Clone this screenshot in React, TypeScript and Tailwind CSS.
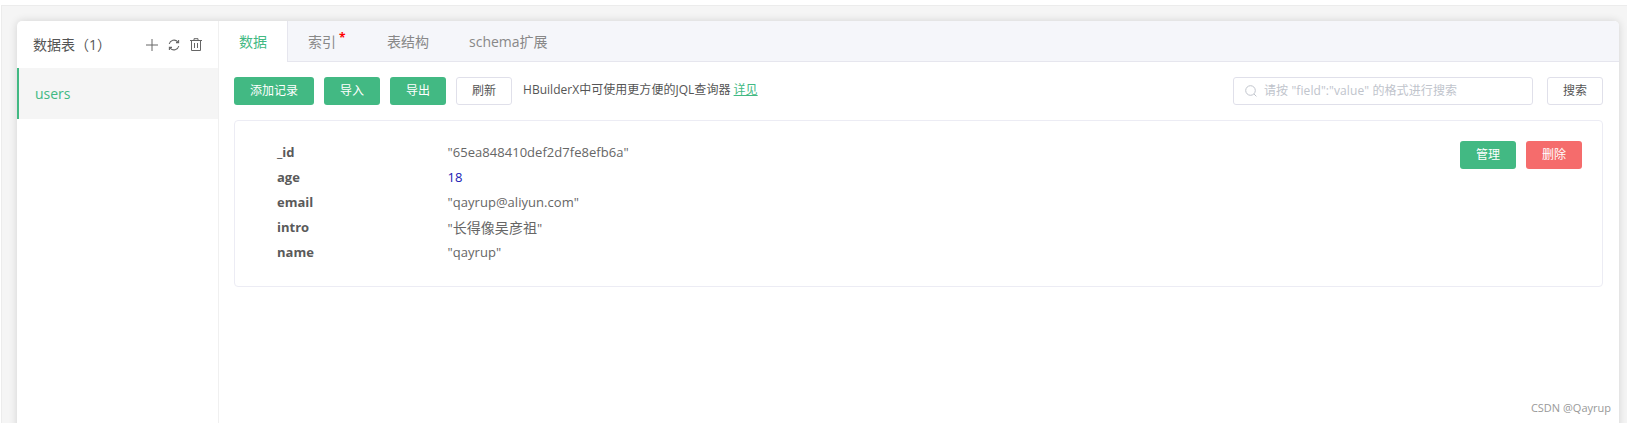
import React from "react";

const font = { fontFamily: '"Open Sans","Noto Sans CJK SC",sans-serif' };

function Btn({ children, w, kind = "green" }: { children: React.ReactNode; w: string; kind?: "green" | "red" | "plain" }) {
  const cls =
    kind === "green"
      ? "bg-[#42b983] text-white"
      : kind === "red"
        ? "bg-[#f56c6c] text-white"
        : "bg-white text-[#555] border border-[#e0e0ea]";
  return <div className={`h-[28px] rounded-[3px] flex items-center justify-center text-[12px] shrink-0 ${w} ${cls}`}>{children}</div>;
}

function Row({ k, v, blue }: { k: string; v: React.ReactNode; blue?: boolean }) {
  return (
    <div className="flex h-[25px] items-center text-[13px]">
      <div className="w-[170.5px] font-bold text-[#5a5a5a] shrink-0">{k}</div>
      <div className={`pt-px tracking-[0.04px] ${blue ? "text-[#1a1ab4]" : "text-[#666]"}`}>{v}</div>
    </div>
  );
}

export default function App() {
  return (
    <div style={font} className="relative h-[423px] w-full overflow-hidden bg-white pt-[5px] pl-px">
      <div className="h-[418px] bg-[#f5f5f5] border-t border-l border-[#ececec] pt-[15px] pl-[15px] pr-[8px]">
        <div className="flex h-[420px] bg-white rounded-t-[5px] shadow-[0_0_8px_rgba(0,0,0,0.14)] overflow-hidden">
          <aside className="w-[202px] shrink-0 border-r border-[#f0f0f0]">
            <div className="h-[47px] flex items-center pl-[16px] pr-[16px] justify-between">
              <span className="text-[14px] text-[#555]">数据表（1）</span>
              <div className="flex items-center gap-[10px] text-[#666]">
                <svg width="12" height="12" viewBox="0 0 12 12" fill="none" stroke="currentColor" strokeWidth="1">
                  <path d="M6 0v12M0 6h12" />
                </svg>
                <svg width="12" height="12" viewBox="0 0 12 12" fill="none" stroke="currentColor" strokeWidth="1.1">
                  <path d="M1.2 5A5 5 0 0 1 9.8 2.8M10.8 7A5 5 0 0 1 2.2 9.2" />
                  <path d="M10.6 1v2.6H8M1.4 11V8.4H4" />
                </svg>
                <svg width="12" height="13" viewBox="0 0 12 13" fill="none" stroke="currentColor" strokeWidth="1">
                  <path d="M0 2.5h12M4 2.5V.7h4v1.8M1.5 2.5v10h9v-10M4.5 5v5M7.5 5v5" />
                </svg>
              </div>
            </div>
            <div className="h-[51px] bg-[#f5f5f5] border-l-2 border-[#42b983] flex items-center pl-[16px] text-[14px] text-[#42b983]">users</div>
          </aside>
          <main className="flex-1 min-w-0">
            <div className="h-[41px] flex bg-[#f5f6fa] border-b border-[#e6e6ee] text-[14px] text-[#888]">
              <div className="h-[41px] w-[69px] bg-white border-r border-[#e6e6ee] text-[#42b983] flex items-center justify-center">数据</div>
              <div className="flex items-center px-[20px]">
                索引<span className="w-[11px] h-[24px] text-[#f00] text-[12px] font-bold leading-[18px] pl-[3px]">*</span>
              </div>
              <div className="flex items-center px-[20px]">表结构</div>
              <div className="flex items-center px-[20px]">schema扩展</div>
            </div>
            <div className="pl-[15px] pr-[16px] pt-[15px]">
              <div className="flex items-center h-[28px]">
                <div className="flex gap-[10px]">
                  <Btn w="w-[80px]">添加记录</Btn>
                  <Btn w="w-[56px]">导入</Btn>
                  <Btn w="w-[56px]">导出</Btn>
                  <Btn w="w-[56px]" kind="plain">刷新</Btn>
                </div>
                <div className="ml-[11px] text-[12px] text-[#555] -mt-[2px] tracking-[0.03px]">
                  HBuilderX中可使用更方便的JQL查询器 <span className="text-[#42b983] underline">详见</span>
                </div>
                <div className="ml-auto w-[300px] h-[28px] border border-[#e0e0ea] rounded-[3px] flex items-center pl-[11px] text-[12px] text-[#c0c4cc]">
                  <svg width="12" height="12" viewBox="0 0 12 12" fill="none" stroke="#c0c4cc" strokeWidth="1">
                    <circle cx="5.5" cy="5.5" r="4.8" />
                    <path d="M9 9l2.4 2.4" />
                  </svg>
                  <span className="ml-[7px] tracking-[0.1px]">请按 "field":"value" 的格式进行搜索</span>
                </div>
                <div className="ml-[14px]">
                  <Btn w="w-[56px]" kind="plain">搜索</Btn>
                </div>
              </div>
              <div className="mt-[15px] h-[167px] border border-[#ececf4] rounded-[4px] pt-[19px] pl-[42px] pr-[20px] flex justify-between">
                <div>
                  <Row k="_id" v={'"65ea848410def2d7fe8efb6a"'} />
                  <Row k="age" v="18" blue />
                  <Row k="email" v={'"qayrup@aliyun.com"'} />
                  <Row k="intro" v={<>"<span className="text-[14px]">长得像吴彦祖</span>"</>} />
                  <Row k="name" v={'"qayrup"'} />
                </div>
                <div className="flex gap-[10px] pt-px">
                  <Btn w="w-[56px]">管理</Btn>
                  <Btn w="w-[56px]" kind="red">删除</Btn>
                </div>
              </div>
            </div>
          </main>
        </div>
      </div>
      <div className="absolute right-[16px] bottom-[8px] text-[11px] leading-[14px] text-[#999]">CSDN @Qayrup</div>
    </div>
  );
}
